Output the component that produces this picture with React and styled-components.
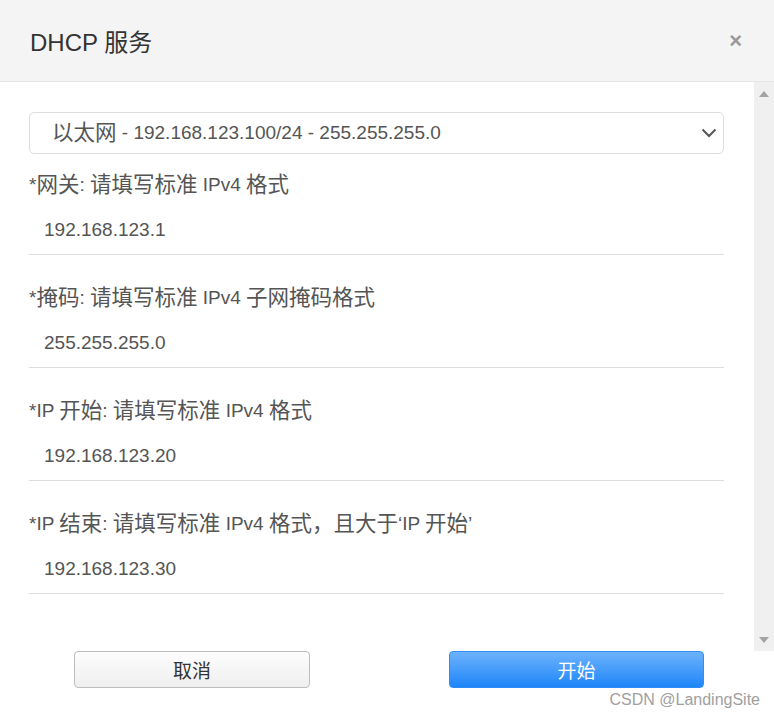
import React from 'react';
import styled, { createGlobalStyle } from 'styled-components';

const GlobalStyle = createGlobalStyle`
  html, body {
    margin: 0;
    padding: 0;
    background: #fff;
  }
  body {
    font-family: "Liberation Sans", Arial, "Noto Sans CJK SC", sans-serif;
    color: #555;
  }
`;

const Dialog = styled.div`
  width: 774px;
  height: 721px;
  display: flex;
  flex-direction: column;
  position: relative;
  overflow: hidden;
  background: #fff;
`;

const Header = styled.div`
  height: 81px;
  flex: none;
  display: flex;
  align-items: center;
  justify-content: space-between;
  padding: 0 32px 0 30px;
  background: #f4f4f4;
  border-bottom: 1px solid #e5e5e5;
`;

const Title = styled.h1`
  margin: 0;
  font-size: 24px;
  font-weight: normal;
  color: #333;
`;

const Close = styled.span`
  font-size: 22px;
  font-weight: bold;
  color: #999;
  cursor: pointer;
`;

const Body = styled.div`
  height: 569px;
  flex: none;
  display: flex;
`;

const Content = styled.div`
  flex: 1;
  padding: 30px 30px 0 29px;
`;

const Scrollbar = styled.div`
  width: 20px;
  background: #f0f0f0;
  display: flex;
  flex-direction: column;
  justify-content: space-between;
  align-items: center;
  padding: 9px 0 8px;
`;

const Arrow = styled.span`
  width: 0;
  height: 0;
  border-left: 5px solid transparent;
  border-right: 5px solid transparent;
  ${(p) => (p.$down ? 'border-top: 6px solid #a3a3a3;' : 'border-bottom: 6px solid #a3a3a3;')}
`;

const Select = styled.div`
  height: 40px;
  border: 1px solid #ddd;
  border-radius: 5px;
  display: flex;
  align-items: center;
  justify-content: space-between;
  padding: 0 6px 0 22px;
  margin-bottom: 18px;
  font-size: 19px;
  line-height: 26px;
  color: #555;
`;

const Field = styled.div`
  & + & {
    margin-top: 30px;
  }
`;

const Label = styled.div`
  font-size: 19px;
  line-height: 26px;
  height: 26px;
  color: #555;
  margin-bottom: 8px;
`;

const Han = styled.span`
  font-size: 21.5px;
  vertical-align: top;
`;

const Value = styled.div`
  height: 48px;
  line-height: 48px;
  padding-left: 15px;
  font-size: 19px;
  color: #555;
  border-bottom: 1px solid #ddd;
`;

const Footer = styled.div`
  display: flex;
  gap: 139px;
  padding-left: 74px;
`;

const Button = styled.button`
  width: ${(p) => p.$w}px;
  height: 37px;
  border-radius: 4px;
  font-family: inherit;
  font-size: 19px;
  cursor: pointer;
  ${(p) =>
    p.$primary
      ? `
    color: #fff;
    border: 1px solid #2f8ef5;
    background: linear-gradient(#6cb2fc, #1f86f8);
  `
      : `
    color: #333;
    border: 1px solid #bdbdbd;
    background: linear-gradient(#fdfdfd, #efefef);
  `}
`;

const Watermark = styled.div`
  position: absolute;
  right: 14px;
  bottom: 12px;
  font-size: 16px;
  color: #a0a0a0;
`;

// the reference's Chinese glyphs run a little wider than the Latin ones
const widened = (text) =>
  text.split(/([\u3000-\u9fff\uff00-\uffef]+)/).map((part, i) =>
    i % 2 ? <Han key={i}>{part}</Han> : part
  );

const fields = [
  ['*网关: 请填写标准 IPv4 格式', '192.168.123.1'],
  ['*掩码: 请填写标准 IPv4 子网掩码格式', '255.255.255.0'],
  ['*IP 开始: 请填写标准 IPv4 格式', '192.168.123.20'],
  ['*IP 结束: 请填写标准 IPv4 格式，且大于‘IP 开始’', '192.168.123.30'],
];

export default function App() {
  return (
    <>
      <GlobalStyle />
      <Dialog>
        <Header>
          <Title>DHCP 服务</Title>
          <Close>×</Close>
        </Header>
        <Body>
          <Content>
            <Select>
              <span>{widened('以太网 - 192.168.123.100/24 - 255.255.255.0')}</span>
              <svg width="16" height="10" viewBox="0 0 16 10">
                <path d="M1.5 1.5 L8 8 L14.5 1.5" fill="none" stroke="#555" strokeWidth="2" />
              </svg>
            </Select>
            {fields.map(([label, value]) => (
              <Field key={label}>
                <Label>{widened(label)}</Label>
                <Value>{value}</Value>
              </Field>
            ))}
          </Content>
          <Scrollbar>
            <Arrow />
            <Arrow $down />
          </Scrollbar>
        </Body>
        <Footer>
          <Button $w={236}>取消</Button>
          <Button $w={255} $primary>开始</Button>
        </Footer>
        <Watermark>CSDN @LandingSite</Watermark>
      </Dialog>
    </>
  );
}
